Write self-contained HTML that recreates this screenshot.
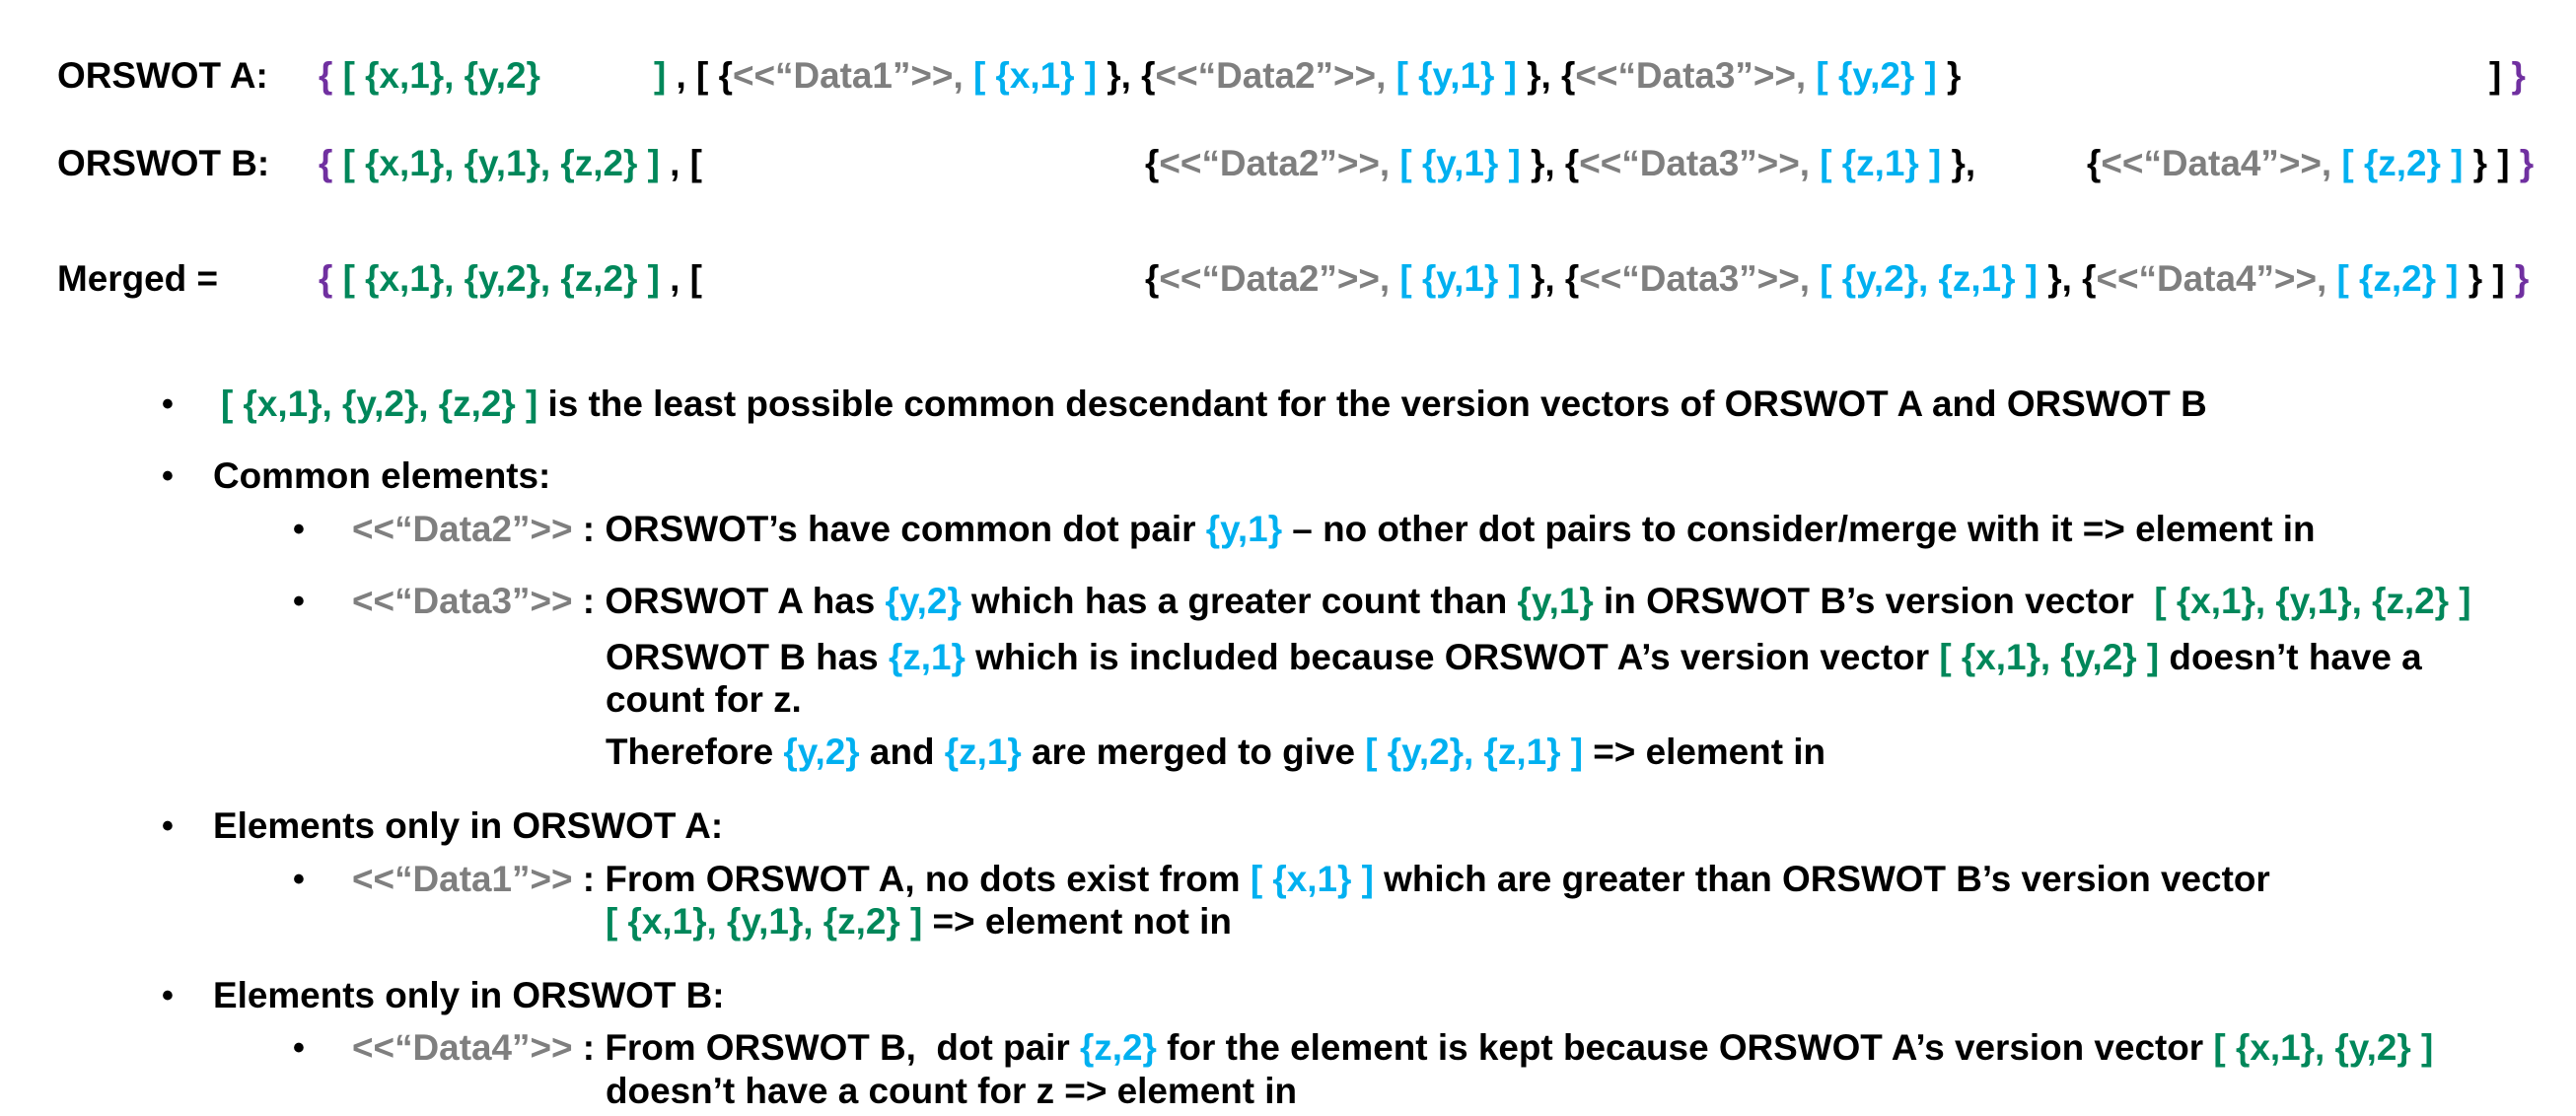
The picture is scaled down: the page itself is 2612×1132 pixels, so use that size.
<!DOCTYPE html>
<html><head><meta charset="utf-8"><style>
html,body{margin:0;padding:0;background:#fff;}
body{width:2612px;height:1132px;position:relative;overflow:hidden;font-family:"Liberation Sans",Arial,sans-serif;font-weight:bold;font-size:36.9px;color:#000;}
.l{position:absolute;white-space:pre;line-height:44px;margin-top:-2px;}
.g{color:#00875a}.c{color:#00b0f0}.s{color:#7f7f7f}.p{color:#7030a0}
.b{position:absolute;line-height:44px;margin-top:-2px;font-size:34px;}
</style></head><body>
<div class="l" style="left:58px;top:57px">ORSWOT A:</div>
<div class="l" style="left:323px;top:57px"><span class="p">{</span> <span class="g">[ {x,1}, {y,2}</span></div>
<div class="l" style="left:663px;top:57px"><span class="g">]</span> , [ {<span class="s">&lt;&lt;“Data1”&gt;&gt;,</span> <span class="c">[ {x,1} ]</span> }, {<span class="s">&lt;&lt;“Data2”&gt;&gt;,</span> <span class="c">[ {y,1} ]</span> }, {<span class="s">&lt;&lt;“Data3”&gt;&gt;,</span> <span class="c">[ {y,2} ]</span> }</div>
<div class="l" style="left:2524px;top:57px">] <span class="p">}</span></div>

<div class="l" style="left:58px;top:146px">ORSWOT B:</div>
<div class="l" style="left:323px;top:146px"><span class="p">{</span> <span class="g">[ {x,1}, {y,1}, {z,2} ]</span> , [</div>
<div class="l" style="left:1161px;top:146px">{<span class="s">&lt;&lt;“Data2”&gt;&gt;,</span> <span class="c">[ {y,1} ]</span> }, {<span class="s">&lt;&lt;“Data3”&gt;&gt;,</span> <span class="c">[ {z,1} ]</span> },</div>
<div class="l" style="left:2116px;top:146px">{<span class="s">&lt;&lt;“Data4”&gt;&gt;,</span> <span class="c">[ {z,2} ]</span> } ] <span class="p">}</span></div>

<div class="l" style="left:58px;top:263px">Merged =</div>
<div class="l" style="left:323px;top:263px"><span class="p">{</span> <span class="g">[ {x,1}, {y,2}, {z,2} ]</span> , [</div>
<div class="l" style="left:1161px;top:263px">{<span class="s">&lt;&lt;“Data2”&gt;&gt;,</span> <span class="c">[ {y,1} ]</span> }, {<span class="s">&lt;&lt;“Data3”&gt;&gt;,</span> <span class="c">[ {y,2}, {z,1} ]</span> }, {<span class="s">&lt;&lt;“Data4”&gt;&gt;,</span> <span class="c">[ {z,2} ]</span> } ] <span class="p">}</span></div>

<div class="b" style="left:164px;top:390px">•</div>
<div class="l" style="left:224px;top:390px"><span class="g">[ {x,1}, {y,2}, {z,2} ]</span> is the least possible common descendant for the version vectors of ORSWOT A and ORSWOT B</div>

<div class="b" style="left:164px;top:463px">•</div>
<div class="l" style="left:216px;top:463px">Common elements:</div>

<div class="b" style="left:297px;top:517px">•</div>
<div class="l" style="left:357px;top:517px"><span class="s">&lt;&lt;“Data2”&gt;&gt;</span> : ORSWOT’s have common dot pair <span class="c">{y,1}</span> – no other dot pairs to consider/merge with it =&gt; element in</div>

<div class="b" style="left:297px;top:590px">•</div>
<div class="l" style="left:357px;top:590px"><span class="s">&lt;&lt;“Data3”&gt;&gt;</span> : ORSWOT A has <span class="c">{y,2}</span> which has a greater count than <span class="g">{y,1}</span> in ORSWOT B’s version vector  <span class="g">[ {x,1}, {y,1}, {z,2} ]</span></div>
<div class="l" style="left:614px;top:647px">ORSWOT B has <span class="c">{z,1}</span> which is included because ORSWOT A’s version vector <span class="g">[ {x,1}, {y,2} ]</span> doesn’t have a</div>
<div class="l" style="left:614px;top:690px">count for z.</div>
<div class="l" style="left:614px;top:743px">Therefore <span class="c">{y,2}</span> and <span class="c">{z,1}</span> are merged to give <span class="c">[ {y,2}, {z,1} ]</span> =&gt; element in</div>

<div class="b" style="left:164px;top:818px">•</div>
<div class="l" style="left:216px;top:818px">Elements only in ORSWOT A:</div>
<div class="b" style="left:297px;top:872px">•</div>
<div class="l" style="left:357px;top:872px"><span class="s">&lt;&lt;“Data1”&gt;&gt;</span> : From ORSWOT A, no dots exist from <span class="c">[ {x,1} ]</span> which are greater than ORSWOT B’s version vector</div>
<div class="l" style="left:614px;top:915px"><span class="g">[ {x,1}, {y,1}, {z,2} ]</span> =&gt; element not in</div>

<div class="b" style="left:164px;top:990px">•</div>
<div class="l" style="left:216px;top:990px">Elements only in ORSWOT B:</div>
<div class="b" style="left:297px;top:1043px">•</div>
<div class="l" style="left:357px;top:1043px"><span class="s">&lt;&lt;“Data4”&gt;&gt;</span> : From ORSWOT B,  dot pair <span class="c">{z,2}</span> for the element is kept because ORSWOT A’s version vector <span class="g">[ {x,1}, {y,2} ]</span></div>
<div class="l" style="left:614px;top:1087px">doesn’t have a count for z =&gt; element in</div>
</body></html>
